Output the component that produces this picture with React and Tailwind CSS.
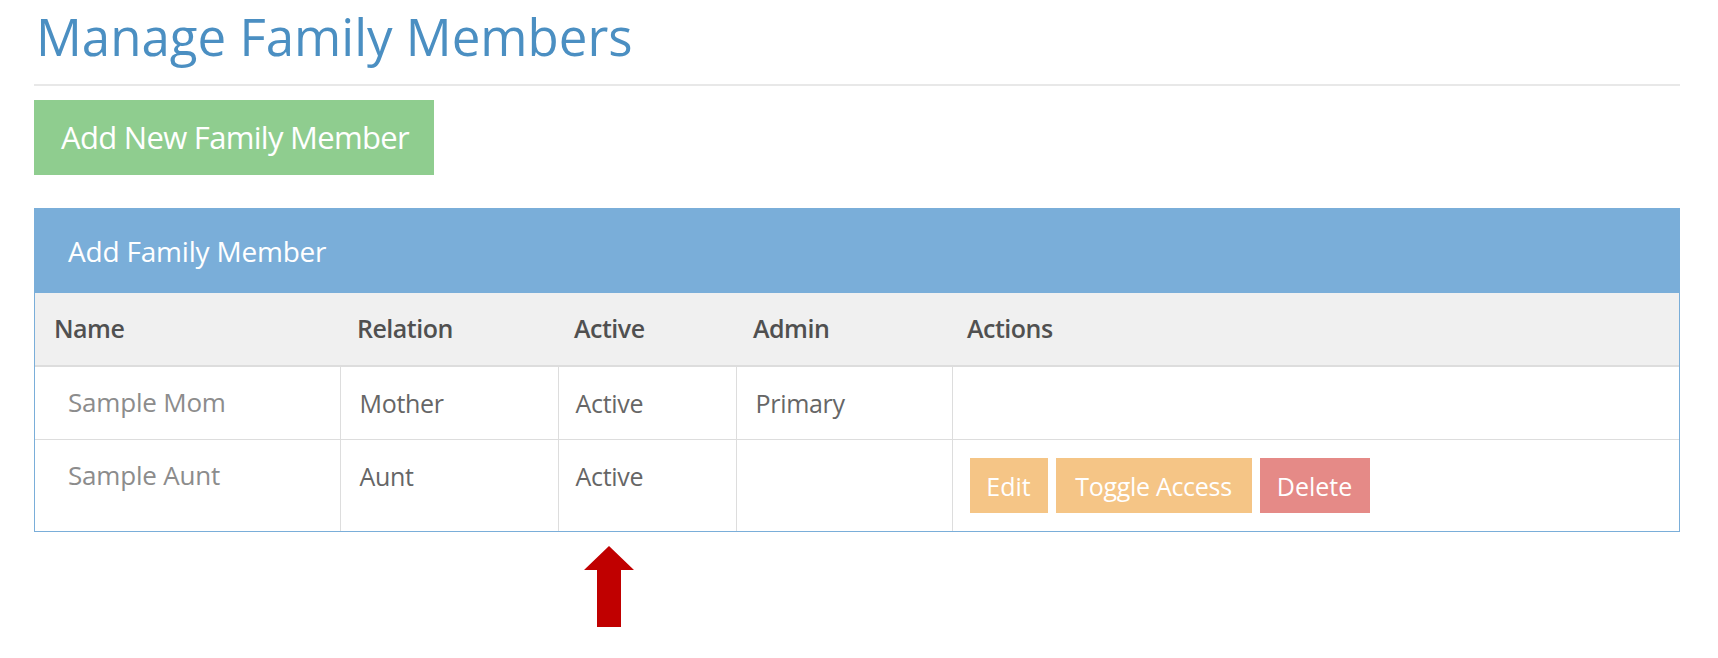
import React from 'react';

const members = [
  { id: 1, name: 'Sample Mom', relation: 'Mother', active: 'Active', admin: 'Primary', actions: false },
  { id: 2, name: 'Sample Aunt', relation: 'Aunt', active: 'Active', admin: '', actions: true },
];

const App = () => {
  return (
    <div className="min-h-[658px] bg-white pl-[34px] pr-[38px]" style={{ fontFamily: '"Open Sans", sans-serif' }}>
      <h1 className="pt-[8px] pl-[2px] text-[51px] leading-[56px] font-normal text-[#4b8fc2] tracking-[0px]">
        Manage Family Members
      </h1>
      <div className="mt-[20px] h-[2px] bg-[#e8e8e8]" />

      <button className="mt-[14px] h-[75px] w-[400px] bg-[#8fcd8f] pl-[2px] text-[31px] text-white tracking-[-0.7px]">
        Add New Family Member
      </button>

      <div className="mt-[33px] border border-[#7aaed9] border-t-0">
        <div className="flex h-[85px] items-center bg-[#7aaed9] pl-[33px] text-[28px] text-white tracking-[-0.2px]">
          Add Family Member
        </div>
        <table className="w-full table-fixed border-collapse text-[25px]">
          <colgroup>
            <col className="w-[305px]" />
            <col className="w-[218px]" />
            <col className="w-[178px]" />
            <col className="w-[216px]" />
            <col />
          </colgroup>
          <thead>
            <tr className="bg-[#f0f0f0] border-b-2 border-[#dddddd]">
              <th className="h-[73px] px-[19px] text-left font-semibold text-[#505050] tracking-[-0.5px]">Name</th>
              <th className="px-[17px] text-left font-semibold text-[#505050] tracking-[-0.5px]">Relation</th>
              <th className="px-[16px] text-left font-semibold text-[#505050] tracking-[-0.5px]">Active</th>
              <th className="px-[17px] text-left font-semibold text-[#505050] tracking-[-0.5px]">Admin</th>
              <th className="px-[15px] text-left font-semibold text-[#505050] tracking-[-0.5px]">Actions</th>
            </tr>
          </thead>
          <tbody>
            {members.map((m) => (
              <tr key={m.id} className="border-b border-[#dddddd] last:border-b-0">
                <td className="py-[16px] pl-[33px] pr-[10px] align-top leading-[38px] text-[26px] text-[#8c8c8c] tracking-[-0.2px]">{m.name}</td>
                <td className="border-l border-[#dddddd] py-[18px] pl-[19px] align-top leading-[36px] text-[#666666] tracking-[-0.3px]">{m.relation}</td>
                <td className="border-l border-[#dddddd] py-[18px] pl-[17px] align-top leading-[36px] text-[#666666] tracking-[-0.3px]">{m.active}</td>
                <td className="border-l border-[#dddddd] py-[18px] pl-[19px] align-top leading-[36px] text-[#666666] tracking-[-0.3px]">{m.admin}</td>
                <td className="border-l border-[#dddddd] py-[18px] pl-[17px] align-top leading-[36px]">
                  {m.actions && (
                    <div className="flex gap-[8px]">
                      <button className="h-[55px] w-[78px] bg-[#f5c586] text-white">Edit</button>
                      <button className="h-[55px] w-[196px] bg-[#f5c586] text-white tracking-[-0.3px]">Toggle Access</button>
                      <button className="h-[55px] w-[110px] bg-[#e58a87] text-white">Delete</button>
                    </div>
                  )}
                </td>
              </tr>
            ))}
          </tbody>
        </table>
      </div>

      <div className="mt-[14px] pl-[550px]">
        <svg width="50" height="81" viewBox="0 0 50 81">
          <polygon points="25,0 50,24 37,24 37,81 13,81 13,24 0,24" fill="#c00000" />
        </svg>
      </div>
    </div>
  );
};

export default App;
